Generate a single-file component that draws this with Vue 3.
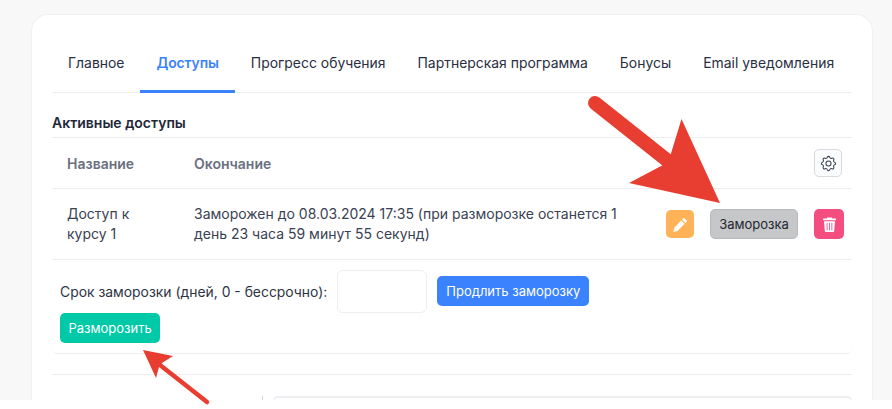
<template>
  <div class="root">
    <div class="page">
      <div class="card">
        <nav class="tabs">
          <a v-for="t in tabs" :key="t" class="tab" :class="{ active: t === 'Доступы' }">{{ t }}</a>
        </nav>
        <div class="title">Активные доступы</div>
        <div class="row head">
          <div>Название</div>
          <div>Окончание</div>
          <div class="head-act">
            <button class="gear">
              <svg width="19" height="19" viewBox="0 0 24 24" fill="none" stroke="#3a4150" stroke-width="1.3" stroke-linejoin="round">
                <path d="M10.325 4.317c.426-1.756 2.924-1.756 3.35 0a1.724 1.724 0 002.573 1.066c1.543-.94 3.31.826 2.37 2.37a1.724 1.724 0 001.065 2.572c1.756.426 1.756 2.924 0 3.35a1.724 1.724 0 00-1.066 2.573c.94 1.543-.826 3.31-2.37 2.37a1.724 1.724 0 00-2.572 1.065c-.426 1.756-2.924 1.756-3.35 0a1.724 1.724 0 00-2.573-1.066c-1.543.94-3.31-.826-2.37-2.37a1.724 1.724 0 00-1.065-2.572c-1.756-.426-1.756-2.924 0-3.35a1.724 1.724 0 001.066-2.573c-.94-1.543.826-3.31 2.37-2.37.996.608 2.296.07 2.572-1.065z" />
                <circle cx="12" cy="12" r="3.2" />
              </svg>
            </button>
          </div>
        </div>
        <div class="row item">
          <div class="name">Доступ к курсу 1</div>
          <div class="end">Заморожен до 08.03.2024 17:35 (при разморозке останется 1 день 23 часа 59 минут 55 секунд)</div>
          <div class="acts">
            <button class="ico edit">
              <svg width="15" height="15" viewBox="0 0 14 14" fill="#fff">
                <path d="M9.600 1.200a.8.8 0 0 1 1.100 0l2.100 2.100a.8.8 0 0 1 0 1.100l-1.200 1.200-3.200-3.200zM7.600 3.200l3.200 3.200-6.600 6.600-3.900.9.900-3.900z" />
              </svg>
            </button>
            <button class="btn freeze">Заморозка</button>
            <button class="ico del">
              <svg width="13" height="15" viewBox="0 0 12 14">
                <path fill="#fff" d="M4 .5h4l.6 1H12v1.600H0V1.500h3.400zM.9 4h10.200l-.7 9a1 1 0 0 1-1 1H2.600a1 1 0 0 1-1-1z" />
                <path stroke="#f34e7f" stroke-width=".8" d="M3.800 5.500v7M6 5.500v7M8.200 5.500v7" />
              </svg>
            </button>
          </div>
        </div>
        <div class="extra">
          <div class="line">
            <label>Срок заморозки (дней, 0 - бессрочно):</label>
            <input class="days" type="text" />
            <button class="btn blue">Продлить заморозку</button>
          </div>
          <button class="btn green">Разморозить</button>
        </div>
        <div class="spacer"></div>
        <div class="next">
          <div class="next-side"></div>
          <div class="next-box"></div>
        </div>
      </div>
    </div>

    <svg class="arrows" width="892" height="409" viewBox="0 0 892 409">
      <line x1="595" y1="103" x2="668" y2="161" stroke="#e83e31" stroke-width="14" stroke-linecap="round" />
      <polygon points="681.500,119 720,203 629,183 663,165 670.500,155" fill="#e83e31" />
      <line x1="160" y1="365" x2="207" y2="402" stroke="#e83e31" stroke-width="4.500" stroke-linecap="round" />
      <polygon points="143,350 173,356 162,363 159,367 156,378" fill="#e83e31" />
    </svg>
  </div>
</template>

<script setup>
const tabs = ['Главное', 'Доступы', 'Прогресс обучения', 'Партнерская программа', 'Бонусы', 'Email уведомления']
</script>

<style>
html, body { margin: 0; background: #fff; }
</style>

<style scoped>
.root { position: relative; width: 892px; height: 409px; overflow: hidden; font-family: Inter, "Noto Sans", sans-serif; font-size: 14px; color: #2e3444; }
.page { height: 385px; padding: 15px 20px 0 32px; background: #f8f8f9; overflow: hidden; }
.card { box-sizing: border-box; width: 840px; height: 420px; padding: 20px; background: #fff; border-radius: 16px; box-shadow: 0 0 0 1px #f1f1f5; }
.tabs { display: flex; border-bottom: 1px solid #eeeef2; }
.tab { padding: 18px 16px 17px; line-height: 20px; border-bottom: 3px solid transparent; margin-bottom: -1px; font-size: 13.93px; color: #2a2f3f; white-space: nowrap; }
.tab.active { color: #3b82fe; border-bottom-color: #3b82fe; font-weight: 600; letter-spacing: -0.1px; }
.title { padding: 20px 0 4px; line-height: 20px; font-size: 14px; font-weight: 600; color: #232838; border-bottom: 1px solid #eeeef2; }
.row { display: grid; grid-template-columns: 127px 472px 178px; padding-left: 15px; align-items: center; border-bottom: 1px solid #eeeef2; }
.head { height: 50px; font-weight: 600; color: #6b7080; }
.head-act { display: flex; justify-content: flex-end; padding-right: 2px; }
.gear { width: 28px; height: 28px; display: flex; align-items: center; justify-content: center; padding: 0; background: #fbfcfe; border: 1px solid #d9dadd; border-radius: 5px; }
.item { height: 70px; line-height: 20px; color: #3a4152; }
.name { width: 90px; }
.end { padding-right: 30px; }
.acts { display: flex; align-items: center; gap: 16px; }
.ico { display: flex; align-items: center; justify-content: center; padding: 0; border: none; border-radius: 5px; }
.edit { width: 28px; height: 28px; background: #ffb257; }
.del { width: 30px; height: 30px; background: #f34e7f; }
.btn { height: 30px; box-sizing: border-box; padding: 0 8.5px; border: none; border-radius: 5px; font-family: inherit; font-size: 13px; line-height: 30px; white-space: nowrap; }
.freeze { width: 88px; background: #c6c7c9; border: 1px solid #b9babd; color: #22262f; line-height: 28px; padding: 0; }
.blue { padding: 0 9px; margin-bottom: 2px; background: #3b82fe; color: #fff; }
.green { display: block; background: #00c9a7; color: #fff; }
.extra { padding: 10px 8px; border-bottom: 1px solid #eeeef2; border-radius: 0 0 5px 5px; }
.line { display: flex; align-items: center; gap: 10px; }
.line label { font-size: 13.9px; }
.days { box-sizing: border-box; width: 90px; height: 43px; border: 1px solid #eeeef2; border-radius: 6px; background: #fff; }
.spacer { height: 20px; border-bottom: 1px solid #eeeef2; }
.next { display: flex; padding-top: 21px; }
.next-side { width: 210px; height: 20px; border-right: 1px solid #d5d6da; }
.next-box { flex: 1; height: 20px; margin-left: 10px; border: 1px solid #eeeef2; border-top-width: 2px; border-radius: 5px; }
.arrows { position: absolute; top: 0; left: 0; pointer-events: none; }
</style>
